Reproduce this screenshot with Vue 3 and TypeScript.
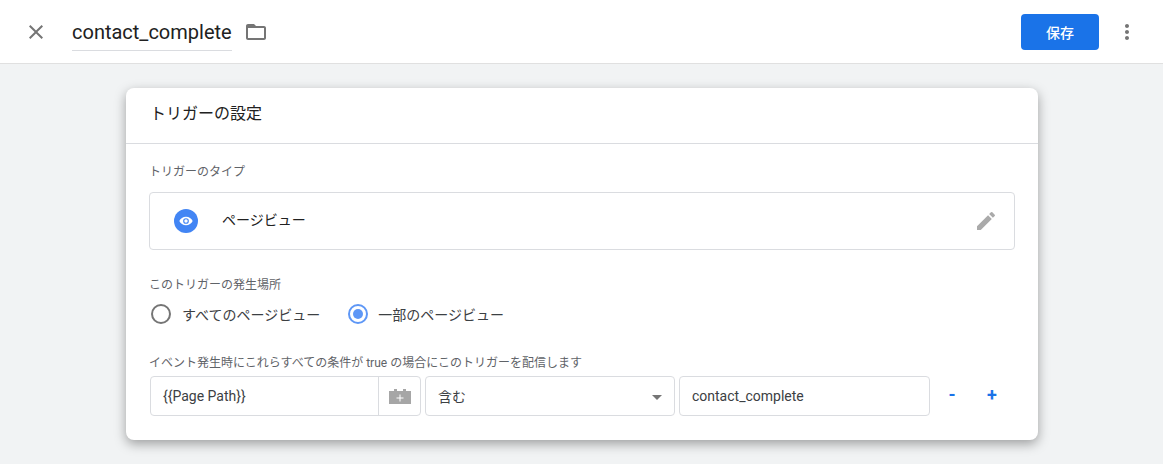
<script setup lang="ts">
const title = 'contact_complete'
</script>

<template>
  <div class="page">
    <header class="topbar">
      <svg class="close" viewBox="0 0 24 24" width="24" height="24"><path fill="#757575" d="M19 6.41 17.59 5 12 10.59 6.41 5 5 6.41 10.59 12 5 17.59 6.41 19 12 13.41 17.59 19 19 17.59 13.41 12z"/></svg>
      <div class="name">{{ title }}</div>
      <svg class="folder" viewBox="0 0 24 24" width="24" height="24"><path fill="#757575" d="M20 6h-8l-2-2H4c-1.1 0-1.99.9-1.99 2L2 18c0 1.1.9 2 2 2h16c1.1 0 2-.9 2-2V8c0-1.1-.9-2-2-2zm0 12H4V8h16v10z"/></svg>
      <div class="spacer"></div>
      <button class="save">保存</button>
      <svg class="more" viewBox="0 0 24 24" width="24" height="24"><path fill="#757575" d="M12 8c1.1 0 2-.9 2-2s-.9-2-2-2-2 .9-2 2 .9 2 2 2zm0 2c-1.1 0-2 .9-2 2s.9 2 2 2 2-.9 2-2-.9-2-2-2zm0 6c-1.1 0-2 .9-2 2s.9 2 2 2 2-.9 2-2-.9-2-2-2z"/></svg>
    </header>
    <main class="content">
      <section class="card">
        <h2 class="card-title">トリガーの設定</h2>
        <div class="card-body">
          <div class="label">トリガーのタイプ</div>
          <div class="type-box">
            <span class="type-icon">
              <svg viewBox="0 0 24 24" width="16" height="16"><path fill="#fff" d="M12 5.5C7.5 5.5 3.7 8.2 2 12c1.7 3.800 5.500 6.500 10 6.500s8.300-2.700 10-6.500c-1.700-3.800-5.500-6.500-10-6.500zm0 10.800a4.300 4.300 0 1 1 0-8.600 4.300 4.300 0 0 1 0 8.600zm0-6.900a2.600 2.600 0 1 0 0 5.200 2.600 2.600 0 0 0 0-5.200z"/></svg>
            </span>
            <span class="type-name">ページビュー</span>
            <svg class="edit" viewBox="0 0 24 24" width="24" height="24"><path fill="#aaa" d="M3 17.250V21h3.750L17.810 9.940l-3.750-3.750L3 17.250zM20.710 7.040a1 1 0 0 0 0-1.410l-2.340-2.340a1 1 0 0 0-1.410 0l-1.830 1.830 3.750 3.750 1.830-1.830z"/></svg>
          </div>
          <div class="label where">このトリガーの発生場所</div>
          <div class="radios">
            <label class="radio"><span class="dot"></span>すべてのページビュー</label>
            <label class="radio"><span class="dot on"></span>一部のページビュー</label>
          </div>
          <div class="label cond">イベント発生時にこれらすべての条件が true の場合にこのトリガーを配信します</div>
          <div class="row">
            <div class="field var">
              <span class="var-text">&#123;&#123;Page Path&#125;&#125;</span>
              <span class="brick">
                <svg viewBox="0 0 24 16" width="24" height="16"><path fill="#a6a6a6" d="M1 3h5V1h3v2h6V1h3v2h5v13H1z"/><path fill="#fff" d="M11.500 6.500h1v3h3v1h-3v3h-1v-3h-3v-1h3z"/></svg>
              </span>
            </div>
            <div class="field select">
              <span>含む</span>
              <i class="caret"></i>
            </div>
            <div class="field value">contact_complete</div>
            <span class="op minus">-</span>
            <span class="op plus">+</span>
          </div>
        </div>
      </section>
    </main>
  </div>
</template>

<style>
html, body { margin: 0; background: #f1f3f4; }
</style>

<style scoped>
.page {
  width: 1163px;
  height: 464px;
  overflow: hidden;
  background: #f1f3f4;
  font-family: Roboto, "Noto Sans CJK JP", sans-serif;
  color: #212121;
}
.topbar {
  height: 63px;
  background: #fff;
  border-bottom: 1px solid #e0e0e0;
  display: flex;
  align-items: center;
  padding: 0 24px;
}
.close { flex: none; }
.name {
  margin-left: 24px;
  font-size: 20px;
  line-height: 36px;
  height: 36px;
  margin-top: 1px;
  border-bottom: 1px solid #dadce0;
  color: #212121;
}
.folder { margin-left: 12px; flex: none; }
.spacer { flex: 1; }
.save {
  width: 78px;
  height: 36px;
  border: 0;
  border-radius: 4px;
  background: #1a73e8;
  color: #fff;
  font: 500 14px Roboto, "Noto Sans CJK JP", sans-serif;
  padding: 0;
}
.more { margin-left: 16px; flex: none; }
.content {
  display: flex;
  justify-content: flex-start;
  padding: 24px 0 0 126px;
}
.card {
  width: 912px;
  height: 352px;
  background: #fff;
  border-radius: 8px;
  box-shadow: 0 4px 12px rgba(0, 0, 0, .35);
}
.card-title {
  margin: 0;
  height: 55px;
  line-height: 52px;
  padding-left: 24px;
  font-size: 16px;
  font-weight: 400;
  border-bottom: 1px solid #dadce0;
}
.card-body { padding: 20px 23px 0 23px; }
.label { font-size: 12px; line-height: 16px; color: #5f6368; }
.type-box {
  margin-top: 12px;
  height: 56px;
  border: 1px solid #dadce0;
  border-radius: 4px;
  display: flex;
  align-items: center;
  padding: 0 16px 0 24px;
}
.type-icon {
  width: 24px;
  height: 24px;
  border-radius: 50%;
  background: #4285f4;
  display: flex;
  align-items: center;
  justify-content: center;
}
.type-name { margin-left: 24px; font-size: 14px; margin-top: -4px; flex: 1; }
.where { margin-top: 27px; }
.radios { display: flex; gap: 26px; margin-top: 9px; height: 24px; }
.radio { display: flex; align-items: center; font-size: 14px; color: #3c4043; }
.dot {
  width: 16px;
  height: 16px;
  border: 2px solid #757575;
  border-radius: 50%;
  margin: 0 11px 0 2px;
  position: relative;
  background: #fff;
}
.dot.on { border-color: #5e97f6; margin-right: 10px; }
.dot.on::after {
  content: "";
  position: absolute;
  inset: 3px;
  border-radius: 50%;
  background: #5e97f6;
}
.cond { margin-top: 29px; }
.row { display: flex; align-items: center; margin-top: 5px; }
.field {
  box-sizing: border-box;
  height: 40px;
  border: 1px solid #dadce0;
  border-radius: 4px;
  font-size: 14px;
  display: flex;
  align-items: center;
  color: #3c4043;
  background: #fff;
}
.var { width: 271px; margin-left: 1px; padding-left: 12px; }
.var-text { flex: 1; }
.brick {
  width: 41px;
  height: 100%;
  border-left: 1px solid #dadce0;
  display: flex;
  align-items: center;
  justify-content: center;
}
.select { width: 250px; margin-left: 4px; padding: 0 12px; justify-content: space-between; }
.caret {
  width: 0;
  height: 0;
  border-left: 5px solid transparent;
  border-right: 5px solid transparent;
  border-top: 5px solid #757575;
  margin-top: 2px;
}
.value { width: 251px; margin-left: 4px; padding-left: 12px; }
.op {
  color: #1a73e8;
  font-size: 18px;
  font-weight: 700;
  width: 10px;
  text-align: center;
  margin-top: -4px;
}
.minus { margin-left: 17px; }
.plus { margin-left: 30px; }
</style>
